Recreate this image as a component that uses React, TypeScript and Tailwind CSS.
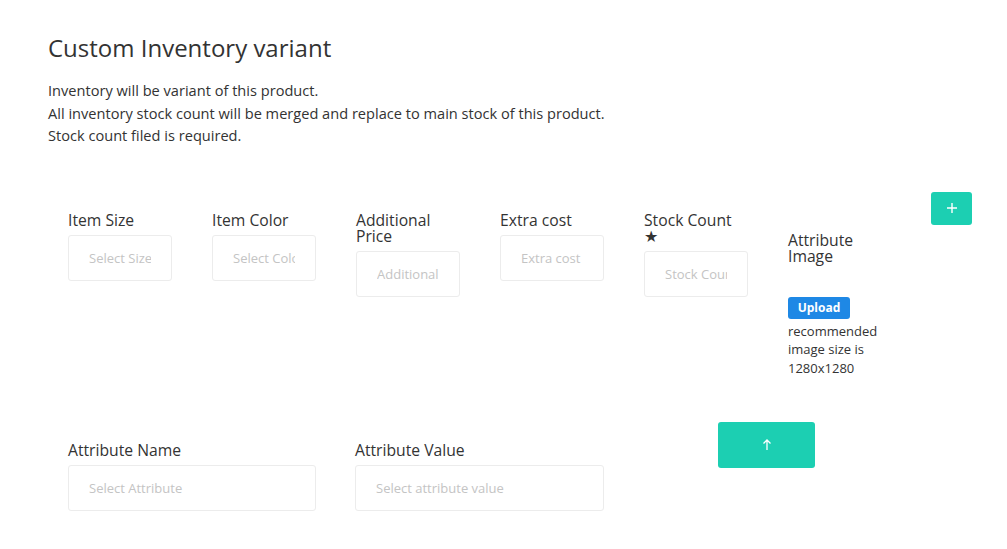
import React from 'react';

const font = { fontFamily: '"Open Sans", "Noto Sans", sans-serif' };

function Field({ label, placeholder, width = 'w-[104px]' }: { label: React.ReactNode; placeholder: string; width?: string }) {
  return (
    <div className={`${width} flex flex-col`}>
      <label className="text-[15.7px] leading-[16px] text-[#333]">{label}</label>
      <input
        placeholder={placeholder}
        className="mt-[7px] h-[46px] w-full rounded-[3px] border border-[#ececec] bg-white px-[20px] text-[13px] text-[#333] outline-none placeholder:text-[#c4c4c4]"
      />
    </div>
  );
}

export default function App() {
  return (
    <div className="min-h-screen bg-white px-[48px] pt-[33px]" style={font}>
      <h1 className="text-[24px] leading-[30px] font-medium text-[#333]">Custom Inventory variant</h1>
      <div className="mt-[16px] text-[14.6px] leading-[22.5px] text-[#333]">
        <p>Inventory will be variant of this product.</p>
        <p>All inventory stock count will be merged and replace to main stock of this product.</p>
        <p>Stock count filed is required.</p>
      </div>

      <div className="mt-[45px] flex items-start pl-[20px]">
        <div className="mt-[20px] flex items-start gap-[40px]">
          <Field label="Item Size" placeholder="Select Size" />
          <Field label="Item Color" placeholder="Select Color" />
          <Field label="Additional Price" placeholder="Additional Price" />
          <Field label="Extra cost" placeholder="Extra cost" />
          <Field
            label={
              <>
                <span className="block">Stock Count</span>
                <span className="block h-[16px] pt-[1px] text-[16px] leading-[15px]">★</span>
              </>
            }
            placeholder="Stock Count"
          />
          <div className="mt-[20px] flex w-[104px] flex-col">
            <span className="text-[15.7px] leading-[16px] text-[#333]">Attribute Image</span>
            <button className="mt-[33px] h-[22px] w-[62px] rounded-[3px] bg-[#1e88e5] text-[12px] font-bold text-white">Upload</button>
            <p className="mt-[3px] w-[96px] text-[13px] leading-[18.5px] text-[#333]">recommended image size is 1280x1280</p>
          </div>
        </div>
        <button className="ml-auto mr-[-13px] flex h-[33px] w-[41px] items-center justify-center rounded-[3px] bg-[#1ccfb2] text-white">
          <svg width="12" height="12" viewBox="0 0 12 12" fill="none" stroke="currentColor" strokeWidth="1.4">
            <path d="M6 1v10M1 6h10" />
          </svg>
        </button>
      </div>

      <div className="mt-[45px] flex items-start pl-[20px]">
        <div className="mt-[20px] flex items-start gap-[39px]">
          <Field label="Attribute Name" placeholder="Select Attribute" width="w-[248px]" />
          <Field label="Attribute Value" placeholder="Select attribute value" width="w-[249px]" />
        </div>
        <button className="ml-[114px] flex h-[46px] w-[97px] items-center justify-center rounded-[3px] bg-[#1ccfb2] text-white">
          <svg width="10" height="12" viewBox="0 0 10 12" fill="none" stroke="currentColor" strokeWidth="1.3">
            <path d="M5 11V1M1.5 4.5 5 1l3.5 3.5" />
          </svg>
        </button>
      </div>
    </div>
  );
}
